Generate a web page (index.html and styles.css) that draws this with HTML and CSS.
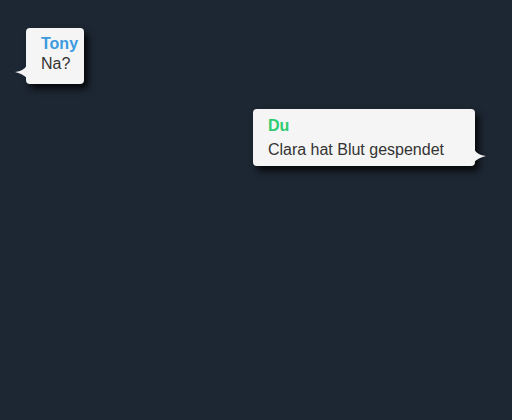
FILE: index.html
```html
<!DOCTYPE html>
<html lang="de">
<head>
<meta charset="utf-8">
<title>Chat</title>
<link rel="stylesheet" href="styles.css">
</head>
<body>
<div class="chat">
  <div class="bubble received">
    <svg class="tail tail-left" width="12" height="14" viewBox="0 0 12 14"><path d="M12 0 Q9 6 0 7 Q7 8.5 12 13 Z" fill="#f5f5f5"/></svg>
    <div class="name tony">Tony</div>
    <div class="text">Na?</div>
  </div>
  <div class="bubble sent">
    <svg class="tail tail-right" width="12" height="14" viewBox="0 0 12 14"><path d="M0 0 Q3 6 12 7 Q5 8.5 0 13 Z" fill="#f5f5f5"/></svg>
    <div class="name du">Du</div>
    <div class="text">Clara hat Blut gespendet</div>
  </div>
</div>
</body>
</html>
```

FILE: styles.css
```css
html, body {
  margin: 0;
  padding: 0;
  height: 100%;
  background: #1d2733;
  font-family: "Liberation Sans", Arial, sans-serif;
}
.chat {
  display: flex;
  flex-direction: column;
  align-items: flex-start;
  padding-top: 28px;
}
.bubble {
  position: relative;
  background: #f5f5f5;
  border-radius: 4px;
  box-shadow: 4px 5px 7px rgba(0, 0, 0, 0.8);
  color: #333;
}
.received {
  margin-left: 26px;
  padding: 6px 6px 10px 15px;
}
.sent {
  align-self: flex-end;
  margin-right: 37px;
  margin-top: 25px;
  padding: 7px 31px 6px 15px;
}
.name {
  font-size: 16px;
  font-weight: bold;
  line-height: 20px;
}
.sent .name {
  margin-bottom: 4px;
}
.tony { color: #3a9be0; }
.du { color: #2ecc71; }
.text {
  font-size: 16px;
  line-height: 20px;
}
.tail {
  position: absolute;
  display: block;
}
.tail-left {
  left: -11px;
  top: 37px;
}
.tail-right {
  right: -11px;
  top: 40px;
}
```
